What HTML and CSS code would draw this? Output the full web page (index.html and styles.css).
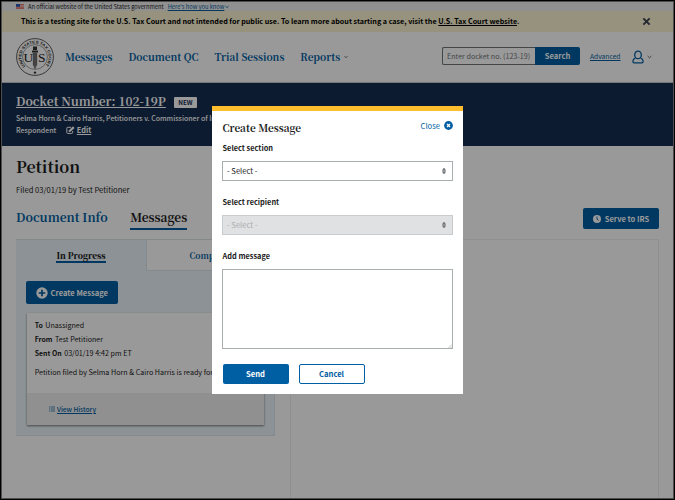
FILE: index.html
```html
<!DOCTYPE html>
<html lang="en">
<head>
<meta charset="utf-8">
<title>Create Message - U.S. Tax Court</title>
<link rel="stylesheet" href="styles.css">
</head>
<body>
<div class="page">
  <div class="gov">
    <svg class="flag" viewBox="0 0 8 5"><path fill="#fff" d="M0 0h8v5H0z"/><path stroke="#d94a3f" stroke-width=".8" d="M0 .4h8M0 1.9h8M0 3.3h8M0 4.6h8"/><path fill="#2b58b8" d="M0 0h4v2.8H0z"/></svg>
    <span>An official website of the United States government</span>
    <a class="how">Here's how you know</a>
    <svg class="gov-chev" viewBox="0 0 4 4"><path d="M.5 1.2 2 2.6 3.5 1.2" fill="none" stroke="#005ea2" stroke-width=".8"/></svg>
  </div>
  <div class="testing">
    <span>This is a testing site for the U.S. Tax Court and not intended for public use. To learn more about starting a case, visit the <u>U.S. Tax Court website</u>.</span>
    <svg class="dismiss" viewBox="0 0 8 8"><path d="M1.2 1.2l5.6 5.6M6.8 1.2 1.2 6.8" stroke="#3d4551" stroke-width="1.7" fill="none"/></svg>
  </div>
  <header class="header">
    <svg class="seal" viewBox="0 0 38 38">
      <defs><path id="arc" d="M9.2 28.4A13.6 13.6 0 1 1 28.8 28.4"/></defs>
      <circle cx="19" cy="19" r="18.4" fill="none" stroke="#4c4c4c" stroke-width=".9"/>
      <circle cx="19" cy="19" r="12.4" fill="none" stroke="#777" stroke-width=".7"/>
      <text class="seal-ring"><textPath href="#arc" textLength="62" lengthAdjust="spacingAndGlyphs">UNITED STATES TAX COURT</textPath></text>
      <path d="M17 8.500h4v3.500h-4zM16 12.500h6v2h-6z" fill="#333"/>
      <path d="M16.800 14.500h4.400v12L19 31.500l-2.200-5z" fill="#888"/>
      <path d="M17.700 14.500v13M19 14.500v16M20.300 14.500v13" stroke="#444" stroke-width=".5"/>
      <text class="seal-us" x="7.500" y="24">U</text><text class="seal-us" x="22" y="24">S</text>
      <circle cx="19" cy="34.600" r="1.200" fill="#333"/>
    </svg>
    <nav class="nav"><a>Messages</a><a>Document QC</a><a>Trial Sessions</a><a>Reports</a>
      <svg class="nav-chev" viewBox="0 0 4 4"><path d="M.5 1.200 2 2.700 3.500 1.200" fill="none" stroke="#333" stroke-width=".7"/></svg>
    </nav>
    <div class="search"><span class="field">Enter docket no. (123-19)</span><span class="go">Search</span></div>
    <a class="advanced">Advanced</a>
    <svg class="user" viewBox="0 0 12 14"><g fill="none" stroke="#005ea2" stroke-width="1.300"><ellipse cx="6" cy="4.900" rx="3.300" ry="3.800"/><path d="M3.300 8.200C1.700 8.800.9 9.600.9 11.200q0 1.600 1.200 1.600h7.800q1.200 0 1.200-1.600c0-1.600-.8-2.400-2.400-3"/></g></svg>
    <svg class="user-chev" viewBox="0 0 5 4"><path d="M.6 1 2.500 2.800 4.400 1" fill="none" stroke="#333" stroke-width=".7"/></svg>
  </header>
  <section class="docket">
    <div class="docket-title"><a>Docket Number: 102-19P</a><span class="badge">NEW</span></div>
    <div class="docket-line">Selma Horn &amp; Cairo Harris, Petitioners v. Commissioner of Internal Revenue,</div>
    <div class="docket-line">Respondent
      <svg class="edit-icon" viewBox="0 0 9 8"><path d="M5 1.300H1.600Q.8 1.300.8 2.100v4.500q0 .8.8.8h4.200q.8 0 .8-.8V5" fill="none" stroke="#fff"/><path d="M2.700 6 3 4.300 7 .3 8.600 1.900 4.500 5.800z" fill="#fff"/></svg><a>Edit</a>
    </div>
  </section>
  <main class="main">
    <h1>Petition</h1>
    <p class="filed">Filed 03/01/19 by Test Petitioner</p>
    <div class="tabs">
      <a class="tab">Document Info</a><a class="tab current">Messages</a>
      <span class="serve"><svg class="clock" viewBox="0 0 8 8"><circle cx="4" cy="4" r="4" fill="#fff"/><path d="M4 1.500V4.200L5.500 5.300" fill="none" stroke="#005ea2" stroke-width=".9"/></svg>Serve to IRS</span>
    </div>
    <div class="columns">
      <section class="messages">
        <div class="subtabs"><span class="subtab on"><b>In Progress</b></span><span class="subtab off">Completed</span></div>
        <div class="create"><svg class="plus" viewBox="0 0 12 12"><circle cx="6" cy="6" r="5.700" fill="#fff"/><path d="M6 2.700v6.600M2.700 6h6.600" stroke="#005ea2" stroke-width="1.700"/></svg>Create Message</div>
        <article class="card">
          <div class="card-body">
            <p><b>To</b>Unassigned</p>
            <p><b>From</b>Test Petitioner</p>
            <p><b>Sent On</b>03/01/19 4:42 pm ET</p>
            <p class="text">Petition filed by Selma Horn &amp; Cairo Harris is ready for review</p>
          </div>
          <div class="card-foot"><svg class="list" viewBox="0 0 6 6"><path d="M0 1h1.400M2 1h4M0 3h1.400M2 3h4M0 5h1.400M2 5h4" stroke="#005ea2" stroke-width="1"/></svg><a>View History</a></div>
        </article>
      </section>
      <section class="viewer"></section>
    </div>
  </main>
</div>
<div class="overlay">
  <div class="modal">
    <div class="modal-head"><h2>Create Message</h2><span class="close">Close<svg class="close-icon" viewBox="0 0 9 9"><circle cx="4.500" cy="4.500" r="4.400" fill="#005ea2"/><path d="M3 3l3 3M6 3 3 6" stroke="#fff" stroke-width="1.300"/></svg></span></div>
    <label>Select section</label>
    <div class="select">- Select -<svg viewBox="0 0 4 6"><path d="M0 2.700 1.200.3h1.600L4 2.700zM0 3.300h4L2.800 5.700H1.200z" fill="#71767a"/></svg></div>
    <label>Select recipient</label>
    <div class="select disabled">- Select -<svg viewBox="0 0 4 6"><path d="M0 2.700 1.200.3h1.600L4 2.700zM0 3.300h4L2.800 5.700H1.200z" fill="#71767a"/></svg></div>
    <label>Add message</label>
    <div class="area"><svg viewBox="0 0 4 4"><path d="M.5 4 4 .5M2.500 4 4 2.500" stroke="#888" stroke-width=".5"/></svg></div>
    <div class="actions"><span class="send">Send</span><span class="cancel">Cancel</span></div>
  </div>
</div>
</body>
</html>
```
FILE: styles.css
```css
* { box-sizing: border-box; }
html, body { margin: 0; height: 500px; overflow: hidden; }
body { background: #000; font-family: "Noto Sans CJK SC", "Noto Sans", sans-serif; font-size: 7.15px; color: #1b1b1b; white-space: nowrap; }
svg { display: block; flex: none; }
h1, h2, p { margin: 0; }
.page { width: 673px; height: 498px; margin: 1px; overflow: hidden; background: #fff; border: 1px solid #808080; display: flow-root; }

.gov { height: 9px; background: #f0f0f0; display: flex; align-items: center; padding-left: 14px; font-size: 5.73px; line-height: 9px; }
.flag { width: 8px; height: 5px; margin-right: 4px; }
.how { font-size: 5.73px; color: #005ea2; text-decoration: underline; margin-left: 4px; }
.gov-chev { width: 4px; height: 4px; margin-left: 1px; }

.testing { height: 21px; background: #faf3d1; display: flex; align-items: center; justify-content: space-between; padding: 0 22px 1px 19px; font-weight: 700; font-size: 7.17px; line-height: 20px; color: #000; }
.dismiss { width: 9px; height: 9px; }

.header { height: 51px; border-bottom: 1px solid #c4c6c8; display: flex; align-items: center; padding-left: 13.5px; }
.seal { width: 38px; height: 38px; }
.seal-ring { font: bold 3.8px "Liberation Sans", sans-serif; fill: #222; }
.seal-us { font: 13.5px "Liberation Serif", serif; fill: #222; }
.nav { display: flex; align-items: center; gap: 16px; margin-left: 11.5px; width: 377px; font: 700 9.95px/20px "Noto Serif CJK SC", "Liberation Serif", serif; color: #005ea2; }
.nav-chev { width: 4px; height: 4px; margin-left: -12px; }
.search { display: flex; width: 138px; height: 18px; line-height: 16px; margin-top: -2px; }
.field { width: 93px; border: 1px solid #71767a; border-right: 0; border-radius: 2px 0 0 2px; padding-left: 4px; color: #71767a; }
.go { flex: 1; background: #005ea2; color: #fff; font-weight: 700; font-size: 7.56px; text-align: center; border-radius: 0 2px 2px 0; line-height: 18px; }
.advanced { color: #005ea2; text-decoration: underline; font-size: 6.69px; margin: -2px 0 0 10px; }
.user { width: 12px; height: 14px; margin-left: 11.5px; }
.user-chev { width: 5px; height: 4px; margin-left: 3px; }

.docket { height: 63px; background: #162e51; color: #fff; padding: 8px 0 0 14px; }
.docket-title { display: flex; align-items: center; font: 700 11.92px/20px "Noto Serif CJK SC", "Liberation Serif", serif; height: 21px; }
.docket-title a, .docket-line a { text-decoration: underline; text-decoration-thickness: 1px; }
.docket-title a { margin-top: -2px; }
.badge { background: #fff; color: #162e51; font: 700 6.3px/12px "Noto Sans CJK SC", sans-serif; width: 23px; height: 11px; border-radius: 1px; text-align: center; margin: 2px 0 0 8px; }
.docket-line { display: flex; align-items: center; height: 12px; font-size: 6.98px; font-weight: 500; line-height: 12px; }
.docket-line a { font-size: 7.4px; font-weight: 700; }
.edit-icon { width: 9px; height: 8px; margin: 0 2px 0 9.5px; }

.main { padding: 10px 14px 0; }
h1 { font: 700 16px/22px "Noto Serif CJK SC", "Liberation Serif", serif; height: 22px; }
.filed { font-size: 7.6px; line-height: 12px; margin-top: 6px; }
.tabs { display: flex; height: 25px; margin-top: 10px; }
.tab { font: 700 11.95px/22px "Noto Serif CJK SC", "Liberation Serif", serif; color: #005ea2; height: 24px; margin-right: 22.5px; }
.tab.current { color: #1b1b1b; border-bottom: 2px solid #005ea2; }
.serve { margin: 2px 0 0 auto; width: 76px; height: 21px; border-radius: 2px; background: #005ea2; color: #fff; font-weight: 700; font-size: 7.53px; line-height: 20px; display: flex; align-items: center; justify-content: center; }
.clock { width: 8px; height: 8px; margin-right: 4px; }
.columns { display: flex; margin-top: 8px; gap: 15px; align-items: flex-start; }
.messages { width: 259px; height: 197px; background: #eaf4f9; border: 1px solid #dce5e8; border-left: 0; }
.viewer { flex: 1; height: 280px; border: 1px solid #eee; }
.subtabs { display: grid; grid-template-columns: 130px 1fr; font: 700 8.3px/30px "Noto Serif CJK SC", "Liberation Serif", serif; height: 31px; }
.subtab { text-align: center; }
.on b { display: inline-block; line-height: 11px; border-bottom: 2px solid #005ea2; }
.off { background: #fff; color: #005ea2; border: 1px solid #dce5e8; border-width: 0 0 1px 1px; padding-left: 4px; }
.create { display: flex; align-items: center; width: 92px; height: 23px; margin: 10px 0 0 10px; padding-left: 10px; background: #005ea2; border-radius: 2px; color: #fff; font-weight: 700; font-size: 7.56px; line-height: 22px; }
.plus { width: 12px; height: 12px; margin-right: 2.5px; }
.card { width: 237px; height: 112px; margin: 9px 0 0 11px; background: #fff; box-shadow: 0 1px 2px #777; }
.card-body { height: 80px; padding: 5px 0 0 7.7px; line-height: 14px; }
.card b { font-weight: 700; font-size: 6.91px; margin-right: 2.5px; }
.card .text { margin-top: 5px; }
.card-foot { height: 32px; background: #f0f0f0; display: flex; align-items: center; padding-left: 21.5px; }
.card-foot a { color: #005ea2; font-size: 6.56px; font-weight: 500; text-decoration: underline; }
.list { width: 6px; height: 6px; margin-right: 2.5px; opacity: .7; }

.overlay { position: fixed; inset: 1px; background: rgba(0, 0, 0, .4); padding: 105px 0 0 211px; }
.modal { width: 251px; height: 287.5px; background: #fff; border-top: 5px solid #ffbe2e; padding: 5px 10px 0; }
.modal-head { display: flex; justify-content: space-between; height: 25px; padding-left: .5px; }
h2 { font: 700 10.06px/23px "Noto Serif CJK SC", "Liberation Serif", serif; color: #1b1b1b; }
.close { display: flex; align-items: center; height: 18px; color: #005ea2; font-size: 7.65px; }
.close-icon { width: 9px; height: 9px; margin-left: 4px; }
label { display: block; font-weight: 700; font-size: 7.38px; line-height: 14px; height: 20px; padding-left: .5px; }
.select { display: flex; align-items: center; justify-content: space-between; height: 20px; border: 1px solid #a9aeb1; margin-bottom: 14px; padding: 0 6px 0 4px; font-size: 7.61px; line-height: 18px; }
.select svg { width: 4px; height: 6px; }
.disabled { background: #dfe1e2; color: #a9aeb1; border-color: #c9cccf; }
.area { height: 80px; border: 1px solid #a9aeb1; display: flex; align-items: flex-end; justify-content: flex-end; }
.area svg { width: 4px; height: 4px; }
.actions { display: flex; gap: 10px; margin: 15px 0 0 .5px; font-weight: 700; font-size: 7.62px; line-height: 19px; text-align: center; }
.send, .cancel { width: 66px; height: 19.5px; border-radius: 2px; }
.send { background: #005ea2; color: #fff; }
.cancel { border: 1px solid #005ea2; color: #005ea2; line-height: 17.5px; }
```
